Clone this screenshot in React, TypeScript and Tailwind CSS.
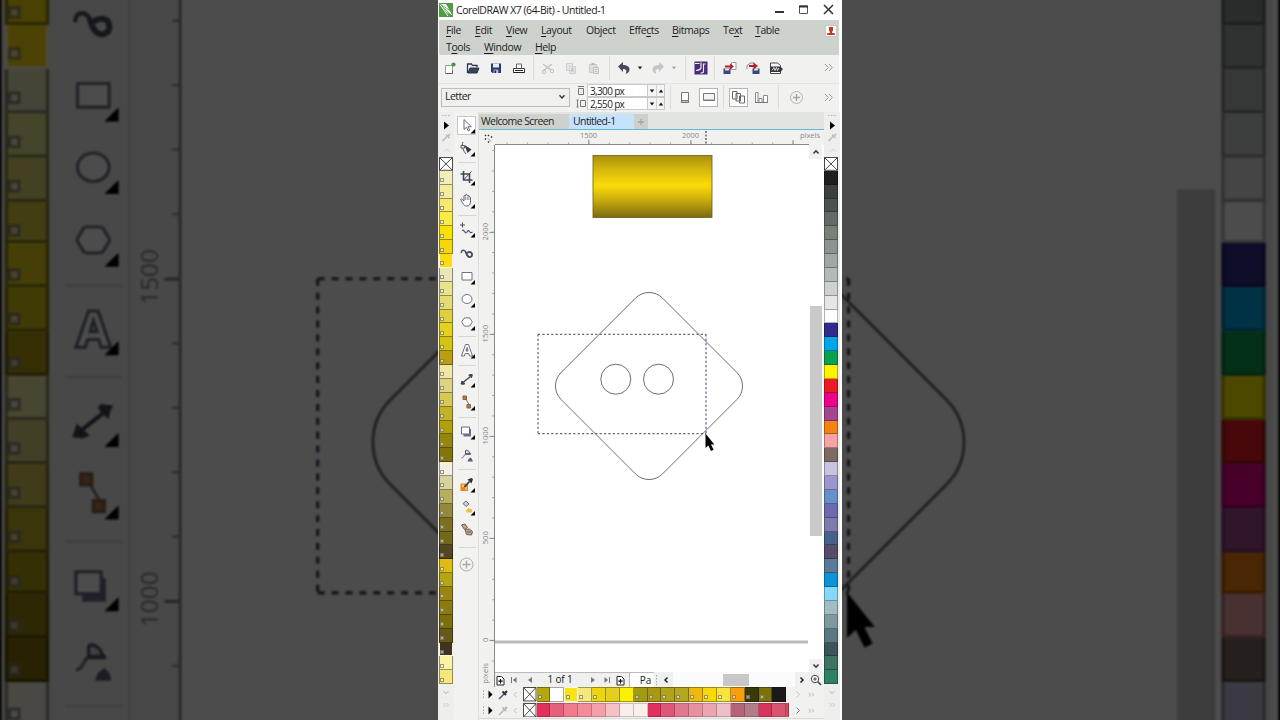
import React from "react";

const LEFT_SWATCHES = [
  "#f1eeb8", "#f3ec9a", "#f6ea6e", "#f8ec45", "#f9e200", "#f5d60c", "#fcdc10", "#e8e6b8", "#e9e38c", "#e4db72",
  "#ded03f", "#e6d21a", "#d8c410", "#b89e10", "#f0e6a0", "#ded382", "#d6c958", "#c4b225", "#b0a00c", "#97860c",
  "#857408", "#f3f0e0", "#d9d29a", "#b8ae60", "#94883c", "#7c7020", "#716818", "#524720", "#e0bc10", "#b4a612",
  "#9c8410", "#8a7a10", "#7c6e0c", "#665a18", "#3e3520", "#fbf2a4", "#f6e878",
];

const RIGHT_SWATCHES = [
  "#1d1f1d", "#3c403d", "#4d5251", "#666a66", "#7b7f7a", "#8c9390", "#a0a7a6", "#b4bab8", "#cdd1cf", "#e5e7e4",
  "#ffffff", "#2f2c8c", "#00a7e8", "#0ba04c", "#fff200", "#ec1c24", "#ec008c", "#a2478f", "#f58213", "#f6a3a6",
  "#7c6a63", "#c6c4e2", "#9b97cb", "#6590cc", "#7069b0", "#7f7aac", "#45618c", "#584c6a", "#5a7a97", "#0b93d8",
  "#86d8f8", "#a3bcc2", "#7e9a9c", "#597882", "#3d5458", "#3f7264", "#2e8263",
];

const DOC_SWATCHES = [
  "#b5a80c", "#ffffff", "#f8e413", "#f4e87a", "#eed50e", "#e2d01c", "#fbf000", "#a39a10", "#a89a0c", "#b0a418",
  "#b2a81e", "#f0b80c", "#f8d80c", "#f8e43c", "#fb9e0c", "#3a3a08", "#7c7208", "#1a1a1a",
];
const DOC_PLAIN = [1, 5, 6, 17];

const PINK_SWATCHES = [
  "#e0305e", "#e6607e", "#ee7c8c", "#f28c98", "#f3a0ac", "#f5c0c6", "#faecea", "#f9f0ea", "#e0305e", "#de567a",
  "#e07890", "#e690a2", "#eaa6b0", "#edbfc6", "#b56577", "#b27c88", "#d83460", "#d85470",
];

const MENU_TOP: [string, string, string][] = [
  ["", "F", "ile"], ["", "E", "dit"], ["", "V", "iew"], ["", "L", "ayout"], ["Ob", "j", "ect"],
  ["Effe", "c", "ts"], ["", "B", "itmaps"], ["Te", "x", "t"], ["", "T", "able"],
];
const MENU_BOTTOM: [string, string, string][] = [["T", "o", "ols"], ["", "W", "indow"], ["", "H", "elp"]];

const MENU_TOP_W = ["w-[29px]", "w-[31px]", "w-[35px]", "w-[45px]", "w-[43px]", "w-[43px]", "w-[51px]", "w-[32px]", "w-[30px]"];
const MENU_BOTTOM_W = ["w-[38px]", "w-[51px]", "w-[30px]"];

function MenuLabel({ parts }: { parts: [string, string, string] }) {
  return (
    <span>
      {parts[0]}
      <span className="underline decoration-1 underline-offset-[1.5px]">{parts[1]}</span>
      {parts[2]}
    </span>
  );
}

function Cell({ className = "w-[23px]", children }: { className?: string; children?: React.ReactNode }) {
  return <div className={`flex h-full shrink-0 items-center justify-center ${className}`}>{children}</div>;
}

function Icon({ w = 16, h = 16, children }: { w?: number; h?: number; children: React.ReactNode }) {
  return (
    <svg width={w} height={h} viewBox={`0 0 ${w} ${h}`} fill="none" className="block shrink-0">
      {children}
    </svg>
  );
}

function VSep({ className = "w-[6px]" }: { className?: string }) {
  return (
    <div className={`flex shrink-0 justify-center ${className}`}>
      <div className="h-[24px] w-px bg-[#dcdcda]" />
    </div>
  );
}

function DoubleChevron() {
  return (
    <svg width="9" height="9" viewBox="0 0 9 9" fill="none" className="block shrink-0">
      <path d="M1 1l3.3 3.5L1 8M5 1l3.3 3.5L5 8" stroke="#9a9a9a" />
    </svg>
  );
}

function Down({ color = "#222" }: { color?: string }) {
  return (
    <Icon w={6} h={4}>
      <path d="M0.8 0.5h4.4L3 3.4z" fill={color} />
    </Icon>
  );
}

function StandardBar() {
  return (
    <div className="flex h-[28px] items-center bg-[#f1f1ef] pb-[3px]">
      <Cell className="ml-[0.5px] w-[23px]">
        <Icon>
          <path d="M3.500 5.500h7v8h-7z" fill="#fff" stroke="#9b9fa6" />
          <path d="M3.500 13.500h7v-3" stroke="#555b66" />
          <circle cx="11.500" cy="4.500" r="2.100" fill="#3f9b35" />
        </Icon>
      </Cell>
      <Cell>
        <Icon>
          <path d="M2.500 13V4h4l1 1.500h4.500V7" stroke="#2c3350" strokeWidth="1.300" />
          <path d="M3 13L5 8h9l-2 5z" fill="#39405e" stroke="#2c3350" />
          <path d="M4.500 6.500h6" stroke="#e6e8f0" />
        </Icon>
      </Cell>
      <Cell>
        <Icon>
          <path d="M3 3.500h10v9.500H4.500L3 11.500z" fill="#2f3768" />
          <path d="M5 3.500h6v4H5z" fill="#e9ebf5" />
          <path d="M5.500 9.500h5V13h-5z" fill="#aab0cc" />
          <path d="M6.500 10.500h1.500V13H6.500z" fill="#1f2550" />
        </Icon>
      </Cell>
      <Cell>
        <Icon>
          <path d="M5.500 8V4h5v4" fill="#fff" stroke="#666" />
          <path d="M2.500 8.500h11v4h-11z" fill="#fff" stroke="#3a3a3a" />
          <path d="M2.500 12.500h11M4 10.500h8" stroke="#222" />
        </Icon>
      </Cell>
      <VSep />
      <Cell>
        <Icon>
          <path d="M3 4l8 6M3 11l9-7" stroke="#c2c2c2" strokeWidth="1.300" />
          <circle cx="12" cy="11" r="1.700" stroke="#c2c2c2" />
          <circle cx="4" cy="12" r="1.700" stroke="#c2c2c2" />
        </Icon>
      </Cell>
      <Cell>
        <Icon>
          <path d="M3.500 3.500h6v7h-6zM6.500 6.500h6v7h-6z" fill="#e6e6e6" stroke="#cfcfcf" />
          <path d="M8 9h3M8 11h3" stroke="#bbb" />
        </Icon>
      </Cell>
      <Cell>
        <Icon>
          <path d="M3.500 4.500h7v8h-7z" fill="#dedede" stroke="#cacaca" />
          <path d="M5.500 3h3v2h-3z" fill="#bbb" />
          <path d="M7.500 7.500h5v6h-5z" fill="#e6e6e6" stroke="#c1c1c1" />
          <path d="M9 9.500h2M9 11.500h2" stroke="#bbb" />
        </Icon>
      </Cell>
      <VSep className="w-[7px]" />
      <Cell>
        <Icon>
          <path d="M2 6.500L7 2v3c4 0 6.500 1.500 6.500 4.500 0 2-1.500 3.500-4 4.500 1.800-2.800 1-5-2.500-5v3z" fill="#454a58" />
        </Icon>
      </Cell>
      <Cell className="w-[8px]"><Down /></Cell>
      <Cell className="ml-[3px] w-[23px]">
        <Icon>
          <path d="M14 6.500L9 2v3c-4 0-6.500 1.500-6.500 4.500 0 2 1.500 3.500 4 4.500-1.800-2.800-1-5 2.500-5v3z" fill="#c4c5c7" />
        </Icon>
      </Cell>
      <Cell className="w-[9px]"><Down color="#aaa" /></Cell>
      <VSep className="w-[14px]" />
      <Cell className="w-[17px]">
        <Icon>
          <path d="M1.500 1.500h13v13h-13z" fill="#4b2a78" />
          <path d="M2 3.500h4.500M8 2.500v6M12.500 4H10.500v7.500c0 1.200-1 1.500-3 1.500M8 8.500c-1.500 1.500-3 2-5 2" stroke="#f0eaf8" strokeWidth="1.200" />
        </Icon>
      </Cell>
      <VSep className="w-[9px]" />
      <Cell>
        <Icon>
          <path d="M1.500 8.500h7v5.500h-7z" fill="#394873" />
          <path d="M3 8.500h4v2H3z" fill="#dfe3ef" />
          <path d="M9.500 2.500h4.500v7H9.500z" fill="#fff" stroke="#999" />
          <path d="M3 5.500h5V3.500L12 6.500 8 9.500v-2H3z" fill="#b31f24" />
        </Icon>
      </Cell>
      <Cell>
        <Icon>
          <path d="M7.500 8.500h7v5.500h-7z" fill="#394873" />
          <path d="M9 8.500h4v2H9z" fill="#dfe3ef" />
          <path d="M2 9V5.500L5.500 3h4" stroke="#888" />
          <path d="M4 5h4.500V2.500L13 6 8.500 9.500V7H4z" fill="#b31f24" />
        </Icon>
      </Cell>
      <Cell>
        <Icon>
          <path d="M2.500 3h7l3 2.500v8h-10z" fill="#fff" stroke="#444" />
          <path d="M2 6.500h10L15 9l-2.500 3H2z" fill="#33363c" />
          <path d="M4 10.500l2-3 1 3 1.500-3 1 3 1.500-2.500" stroke="#fff" strokeWidth=".8" />
        </Icon>
      </Cell>
      <div className="grow" />
      <Cell className="mr-[5px] w-[12px]"><DoubleChevron /></Cell>
    </div>
  );
}

function Field({ value, children }: { value: string; children: React.ReactNode }) {
  return (
    <div className="flex h-[13px] items-center">
      <div className="flex w-[12px] justify-center">{children}</div>
      <div className="flex h-[13px] w-[61px] items-center whitespace-nowrap border border-[#c9c9c7] bg-white pl-[2px] text-[10px] leading-none tracking-[-0.65px] text-[#1d1d1d]">
        {value}
      </div>
      <div className="flex h-[13px] w-[17px] items-center border-y border-r border-[#c9c9c7] bg-[#f4f4f4]">
        <Cell className="w-[8px]"><Down color="#111" /></Cell>
        <Cell className="w-[8px] border-l border-[#d4d4d4]"><span className="rotate-180"><Down color="#111" /></span></Cell>
      </div>
    </div>
  );
}

function PropertyBar() {
  return (
    <div className="flex h-[29px] items-center border-t border-[#e3e3e1] bg-[#f1f1ef] pb-[2px]">
      <div className="ml-[3px] flex h-[19px] w-[129px] items-center justify-between border border-[#bdbdbb] bg-[#f0f0ee] pl-[3px] pr-[3px] text-[10.5px] tracking-[-0.55px] text-[#222]">
        <span>Letter</span>
        <Icon w={8} h={6}><path d="M1.500 1.200L4 4l2.500-2.800" stroke="#333" strokeWidth="1.300" /></Icon>
      </div>
      <div className="ml-[5px] flex flex-col">
        <Field value="3,300 px">
          <Icon w={10} h={11}><path d="M2 1.500h6M2.500 3.500h5v6h-5z" stroke="#777" /></Icon>
        </Field>
        <Field value="2,550 px">
          <Icon w={10} h={11}><path d="M1.500 2v7M.5 2h2M.5 9h2M4.500 2.500h5v6h-5z" stroke="#777" /></Icon>
        </Field>
      </div>
      <VSep className="w-[11px]" />
      <Cell className="w-[18px]">
        <Icon w={10} h={13}>
          <path d="M1.500 1.500h7v10h-7z" fill="#fff" stroke="#777" />
          <path d="M1.500 11.500h7v-2h-7z" fill="#c6c6c6" stroke="#777" />
        </Icon>
      </Cell>
      <div className="ml-[5px] flex size-[19px] items-center justify-center border border-[#b5b5b5] bg-white">
        <Icon w={14} h={10}>
          <path d="M1.500 1.500h11v7h-11z" fill="#f4f4f4" stroke="#777" />
          <path d="M2 7.500h10" stroke="#bbb" />
        </Icon>
      </div>
      <VSep className="w-[11px]" />
      <div className="flex size-[19px] items-center justify-center border border-[#b5b5b5] bg-white">
        <Icon w={15} h={15}>
          <path d="M1.500 1.500h4.500v7.500H1.500zM5 3.500h4.500v7.500H5zM8.500 6h5v7h-5z" fill="#fff" stroke="#666" />
        </Icon>
      </div>
      <Cell className="w-[27px]">
        <Icon w={15} h={13}>
          <path d="M1.500 1.500h2.500v10H1.500zM5 7.500h3v4H5zM9.500 4.500h4v7h-4z" fill="#fff" stroke="#8a8a8a" />
          <path d="M1 11.500h13" stroke="#777" />
        </Icon>
      </Cell>
      <VSep className="w-[7px]" />
      <Cell className="ml-px w-[26px]">
        <Icon w={15} h={15}>
          <circle cx="7.500" cy="7.500" r="6" stroke="#b4b4b4" />
          <path d="M7.500 4v7M4 7.500h7" stroke="#a4a4a4" strokeWidth="1.400" />
        </Icon>
      </Cell>
      <div className="grow" />
      <Cell className="mr-[5px] w-[12px]"><DoubleChevron /></Cell>
    </div>
  );
}

function NoColour() {
  return (
    <svg viewBox="0 0 14 14" preserveAspectRatio="none" className="block h-full w-full bg-white">
      <path d="M.5.5h13v13H.5zM.5.5l13 13M13.500.5l-13 13" stroke="#333" strokeWidth=".9" fill="none" />
    </svg>
  );
}

function Marker() {
  return <div className="mb-[1.500px] size-[4px] border border-[#55544a]/60 bg-white/50" />;
}

function PaletteColumn({ colours, marked, highlighted }: { colours: string[]; marked: boolean; highlighted: number[] }) {
  return (
    <div className={`flex w-[16px] shrink-0 flex-col bg-[#eeeeec] ${marked ? "items-center" : "items-start"}`}>
      <div className="h-[45px] w-full">
        <Icon w={16} h={45}>
          <path d="M4 3.500h9" stroke="#b5b5b5" strokeDasharray="1.500 1.500" />
          <path d="M6 9.500l5 4-5 4z" fill="#000" />
          <path d="M4.500 29l5-5M8 22.500l3.500 3.500M9.500 24.500l2.500-2.500" stroke="#bdbdbd" strokeWidth="1.700" />
          <path d="M6.500 39.500L9 37l2.500 2.500" stroke="#d4d4d4" />
        </Icon>
      </div>
      <div className="h-[13.800px] w-[14px] shrink-0"><NoColour /></div>
      {colours.map((c, i) => (
        <div
          key={i}
          className={`flex h-[13.880px] w-[14px] shrink-0 items-end border-b border-x ${
            highlighted.includes(i) ? "border-[#fff8d8]" : marked ? "border-black/40" : "border-black/30"
          }`}
          style={{ backgroundColor: c }}
        >
          {marked && <Marker />}
        </div>
      ))}
      <div className="grow">
        <Icon w={16} h={28}>
          <path d="M5.500 7L8 9.500 10.500 7" stroke="#b0b0b0" />
          <path d="M5.500 19l2 2-2 2M8.500 19l2 2-2 2" stroke="#cacaca" />
        </Icon>
      </div>
    </div>
  );
}

function Tool({ fly = true, active = false, children }: { fly?: boolean; active?: boolean; children: React.ReactNode }) {
  return (
    <div className="flex h-[23.300px] w-[24px] shrink-0 items-center justify-center">
      <svg width="24" height="23" viewBox="0 0 24 23" fill="none" className="block">
        {active && <path d="M2.500 2.500h18v18h-18z" fill="#fff" stroke="#c6c6c6" />}
        {children}
        {fly && <path d="M20 15v4.500h-4.500z" fill="#000" />}
      </svg>
    </div>
  );
}

function ToolSep({ className = "h-[5.700px]" }: { className?: string }) {
  return (
    <div className={`flex w-full shrink-0 items-center justify-center ${className}`}>
      <div className="h-px w-[18px] bg-[#d6d6d4]" />
    </div>
  );
}

function Toolbox() {
  return (
    <div className="flex w-[25px] shrink-0 flex-col border-r border-[#dededc] bg-[#f2f2f0] pt-[1.500px] pl-px">
      <Tool active><path d="M9 5.500v10l2.500-2.300 1.700 3.800 1.500-.7-1.700-3.600h3.300z" fill="#fff" stroke="#666c7a" /></Tool>
      <Tool>
        <path d="M8 5c-2 4 .5 9 3 12" stroke="#4c5160" />
        <path d="M9.500 8l7 4.500-4 3.500z" fill="#33384a" />
        <path d="M6 8.500h3.500V11H6z" fill="#fff" stroke="#555" />
      </Tool>
      <ToolSep />
      <Tool>
        <path d="M8.500 5v9h9M5.500 8h9v9" stroke="#41465c" strokeWidth="1.600" />
        <path d="M9 13.500l7.500-8" stroke="#41465c" />
      </Tool>
      <Tool>
        <path d="M8 14.500L5.800 11c-.5-1.200.8-1.600 1.600-.6L9 12V7c.2-1 1.400-1 1.600 0v-.8c.3-1 1.500-1 1.700 0V7c.4-.8 1.500-.7 1.600.2v1c.5-.7 1.600-.4 1.600.6V13c0 2.500-1.500 4-3.700 4-2 0-2.800-.9-3.800-2.500z" fill="#fff" stroke="#5b6070" />
        <path d="M10.600 7.500v3.500M12.300 7.500v3.500M13.900 8.500V11" stroke="#7a7f8c" strokeWidth=".8" />
      </Tool>
      <ToolSep />
      <Tool>
        <path d="M7.500 4.500v5M5 7h5" stroke="#4a5068" strokeWidth="1.100" />
        <path d="M7 12.500c1-1 1.800-.2 2.500 1s1.500 2 2.500.5 1.500-2 2.500-.5 1.500 1.500 3 .5" stroke="#4a5068" strokeWidth="1.200" />
      </Tool>
      <Tool fly={false}>
        <path d="M6.300 10.500C6.500 7.500 10 7.500 11 10.500s2 5 4.500 4.300" stroke="#4a4f63" strokeWidth="1.400" strokeLinecap="round" />
        <path d="M11 10.500c1.200 4 3 5 4.800 4.200 2-1 1.600-4.400-.8-4.700-1.200-.1-1.800.2-2.300.6" stroke="#4a4f63" strokeWidth="1.900" strokeLinecap="round" />
      </Tool>
      <Tool><path d="M7 7.500h10v7.500H7z" fill="#fff" stroke="#6c7385" /></Tool>
      <Tool><ellipse cx="12" cy="11" rx="5" ry="4.500" fill="#fff" stroke="#6c7385" /></Tool>
      <Tool><path d="M9 7.200c.3-.5 5.700-.5 6 0l2 3.300c.2.300.2.700 0 1l-2 3.300c-.3.500-5.700.5-6 0l-2-3.300c-.2-.3-.2-.7 0-1z" fill="#fff" stroke="#6c7385" /></Tool>
      <ToolSep className="h-[4.400px]" />
      <Tool>
        <path d="M6.500 17l4-11.500h3L17.500 17h-3l-.8-2.500h-3.500L9.400 17zM11 12h2.200L12 8.500z" fill="#fff" stroke="#656c80" fillRule="evenodd" />
      </Tool>
      <ToolSep />
      <Tool>
        <path d="M8.500 14L15.500 8.500" stroke="#3d4252" strokeWidth="1.300" />
        <path d="M7 13l3 2.700-1.500.6-2.500-.3zM14.500 6.500l3 .3-.5 1-.5 2-2.500-2.500z" fill="#3d4252" stroke="#3d4252" />
      </Tool>
      <Tool>
        <path d="M10 6.500l4.500 8" stroke="#777" />
        <path d="M8 5h3.500v3.500H8zM12 13.500h3.500V17H12z" fill="#b77a4a" stroke="#8a6040" />
      </Tool>
      <ToolSep />
      <Tool>
        <path d="M8.500 9h7.500v7.500H8.500z" fill="#6a7090" />
        <path d="M6.500 7h8v7h-8z" fill="#fff" stroke="#656b84" />
      </Tool>
      <Tool fly={false}>
        <path d="M6.500 14c2.500 0 2-3 4.500-4.500" stroke="#6a7088" />
        <path d="M10.500 6.500c1.500-1 4 .5 4.500 3.500h-4.500z" fill="#d4d8e2" stroke="#4f556c" />
        <path d="M10 10h6" stroke="#4f556c" strokeWidth="1.400" />
        <path d="M12.500 17.500l1-2.500 2-1.500 1.500 1.500.8 2.500z" fill="#5a607a" />
      </Tool>
      <ToolSep />
      <Tool>
        <path d="M5.500 10.500h7.500v7.500H5.500z" fill="#e9862c" />
        <path d="M7 11.500h2V14H7zM10 14h2v2.500h-2z" fill="#f8c27c" />
        <path d="M9.500 14l5-5.500" stroke="#3f3f48" strokeWidth="1.800" />
        <path d="M12.500 6.500l4 4 1.500-4.500-1.500-1z" fill="#2f333f" />
      </Tool>
      <Tool>
        <path d="M8 7.500l3-2.500 3 3-3 2.500z" fill="#d8cdb8" stroke="#666b78" />
        <path d="M11 14.500l2.500-2.500 3.500 1.500v3h-5.500z" fill="#eebd48" />
      </Tool>
      <Tool fly={false}>
        <path d="M6.500 6l3.500-1 2.500 3.500-3 2z" fill="#c9a583" stroke="#6d6054" />
        <path d="M10 10.500l4.500-.5 3 2.500-1 3.500-5-.5z" fill="#bfa68c" stroke="#6d6054" />
        <path d="M12 13h4" stroke="#7c5436" />
      </Tool>
      <ToolSep className="h-[10px]" />
      <Tool fly={false}>
        <circle cx="11.500" cy="11.500" r="6.500" stroke="#b0b0b0" />
        <path d="M11.500 7.500v8M7.500 11.500h8" stroke="#a8a8a8" strokeWidth="1.300" />
      </Tool>
    </div>
  );
}

function range(from: number, to: number, step: number) {
  const out: number[] = [];
  for (let v = from; v <= to; v += step) out.push(v);
  return out;
}

const RULER_FONT = "Open Sans, Noto Sans, sans-serif";

const VERTICAL_MARKS = [
  { label: "2000", y: 232 },
  { label: "1500", y: 334 },
  { label: "1000", y: 436 },
  { label: "500", y: 538 },
  { label: "0", y: 640 },
];

function HorizontalRuler() {
  return (
    <svg width="345" height="15" viewBox="479 130 345 15" className="block shrink-0 bg-[#f1f1f0]">
      <path d="M485 135h1v1h-1zM488 135h1v1h-1zM491 136.500h1v1h-1zM485 138.500h1v1h-1zM488 138.500l3 3M488 141.500h1v1h-1z" fill="#333" stroke="#333" strokeWidth=".5" />
      {range(507.2, 806, 20.420).map((x) => <path key={x} d={`M${x} 142.500v2`} stroke="#999" strokeWidth=".8" />)}
      {[588.8, 690.9, 793].map((x) => <path key={x} d={`M${x} 140v4`} stroke="#888" />)}
      <path d="M495 144.500h314" stroke="#888" />
      <path d="M706 131v13" stroke="#222" strokeDasharray="2 1.500" />
      <g fontFamily={RULER_FONT} fontSize="7.500" fill="#8a8a8a">
        <text x="588.500" y="138" textAnchor="middle">1500</text>
        <text x="690.500" y="138" textAnchor="middle">2000</text>
        <text x="820" y="138" textAnchor="end">pixels</text>
      </g>
    </svg>
  );
}

function VerticalRuler({ from, to }: { from: number; to: number }) {
  return (
    <svg width="16" height="542" viewBox="479 145 16 542" className="block shrink-0 bg-[#f1f1f0]">
      {range(150.500, 680, 20.420).map((y) => <path key={y} d={`M492 ${y}h2.500`} stroke="#999" strokeWidth=".8" />)}
      {VERTICAL_MARKS.map((m) => <path key={m.y} d={`M489.500 ${m.y + 0.4}h5`} stroke="#888" />)}
      <path d="M494.500 145v542" stroke="#888" />
      <g fontFamily={RULER_FONT} fontSize="7.700" fill="#858585" textAnchor="middle">
        {VERTICAL_MARKS.filter((m) => m.y > from && m.y < to).map((m) => (
          <text key={m.y} transform={`translate(487.500 ${m.y - 0.3}) rotate(-90)`}>{m.label}</text>
        ))}
        {to > 673 && <text transform="translate(488 673.500) rotate(-90)">pixels</text>}
      </g>
    </svg>
  );
}

function Drawing({ id }: { id: string }) {
  return (
    <svg width="314" height="527" viewBox="495 145 314 527" fill="none" className="block shrink-0 bg-white">
      <defs>
        <linearGradient id={id} x1="0" y1="0" x2="0" y2="1">
          <stop offset="0" stopColor="#a8900f" />
          <stop offset=".22" stopColor="#d4b60c" />
          <stop offset=".48" stopColor="#fbdc08" />
          <stop offset=".7" stopColor="#cdb00c" />
          <stop offset="1" stopColor="#7b6910" />
        </linearGradient>
      </defs>
      <rect x="593" y="155.500" width="119" height="62" fill={`url(#${id})`} stroke="#6a5c18" strokeWidth=".8" />
      <rect x="577.300" y="314.300" width="143.400" height="143.400" rx="19" transform="rotate(45 649 386)" stroke="#666" strokeWidth=".9" />
      <circle cx="615.800" cy="379.200" r="15" stroke="#5c5c5c" strokeWidth=".9" />
      <circle cx="658.500" cy="379.200" r="15" stroke="#5c5c5c" strokeWidth=".9" />
      <path d="M538 334.300h168M538 433.700h168M538 334.300v99.400M706 334.300v99.400" stroke="#3d3d5c" strokeDasharray="2.200 2.200" />
      <path d="M495 642h313" stroke="#b9b9b9" strokeWidth="3" />
      <path d="M705.500 433.500v14.500l2.800-2.600 2.700 5.600 2.600-1.200-2.600-5.300h3.300z" fill="#000" />
    </svg>
  );
}

function VerticalScroll() {
  return (
    <div className="flex w-[15px] shrink-0 flex-col items-start bg-white">
      <div className="flex h-[14px] w-[13px] items-center justify-center bg-[#f1f1f1]">
        <Icon w={8} h={6}><path d="M1.500 4.500L4 1.800l2.500 2.700" stroke="#333" strokeWidth="1.500" /></Icon>
      </div>
      <div className="ml-[0.500px] mt-[147px] h-[230px] w-[12.500px] bg-[#cacaca]" />
      <div className="grow" />
      <div className="flex h-[13px] w-[13px] items-center justify-center bg-[#f1f1f1]">
        <Icon w={8} h={6}><path d="M1.500 1.500L4 4.200l2.500-2.700" stroke="#333" strokeWidth="1.500" /></Icon>
      </div>
    </div>
  );
}

function AddPage() {
  return (
    <Icon w={9} h={11}>
      <path d="M1 1.500h4.500L8 4v6H1z" fill="#fff" stroke="#222" />
      <path d="M4.500 4v4.500M2.300 6.200h4.400" stroke="#111" strokeWidth="1.200" />
    </Icon>
  );
}

function PageNavigator() {
  return (
    <div className="flex h-[15px] items-center bg-[#f0f0f0] text-[10px] tracking-[-0.2px] text-[#222]">
      <div className="flex h-full w-[134px] items-center border-t border-[#bbb]">
        <Cell className="w-[11px]"><AddPage /></Cell>
        <Cell className="w-[16px]"><Icon w={8} h={8}><path d="M1.500 1v6" stroke="#777" /><path d="M6.500 1v6L3 4z" fill="#777" /></Icon></Cell>
        <Cell className="w-[15px]"><Icon w={6} h={8}><path d="M5 1v6L1 4z" fill="#777" /></Icon></Cell>
        <Cell className="w-[46px] pb-px">1 of 1</Cell>
        <Cell className="w-[19px]"><Icon w={6} h={8}><path d="M1 1v6l4-3z" fill="#777" /></Icon></Cell>
        <Cell className="w-[10px]"><Icon w={8} h={8}><path d="M6.500 1v6" stroke="#777" /><path d="M1.500 1v6L5 4z" fill="#777" /></Icon></Cell>
        <Cell className="w-[16px]"><AddPage /></Cell>
      </div>
      <div className="flex h-full w-[25px] items-center justify-end border-l border-t border-[#bbb] bg-white pr-[3px] pb-px leading-none">Pa</div>
      <Cell className="w-[5px]"><Icon w={3} h={11}><path d="M1.500 1v10" stroke="#aaa" strokeDasharray="1.500 1.500" /></Icon></Cell>
      <Cell className="w-[14px]"><Icon w={6} h={8}><path d="M4.500 1.500L2 4l2.500 2.500" stroke="#222" strokeWidth="1.500" /></Icon></Cell>
      <div className="flex h-full w-[122px] items-center bg-[#fbfbfb]">
        <div className="ml-[50px] h-[12px] w-[26px] bg-[#c8c8c8]" />
      </div>
      <Cell className="w-[13px]"><Icon w={6} h={8}><path d="M1.500 1.500L4 4 1.500 6.500" stroke="#222" strokeWidth="1.500" /></Icon></Cell>
      <Cell className="w-[15px]">
        <Icon w={12} h={12}>
          <circle cx="5" cy="5" r="3.700" fill="#fff" stroke="#444" />
          <path d="M5 3.200v3.600M3.200 5h3.600" stroke="#444" />
          <path d="M7.800 7.800L11 11" stroke="#444" strokeWidth="1.600" />
        </Icon>
      </Cell>
    </div>
  );
}

function BottomPalette({ colours, plain, tail, dark }: { colours: string[]; plain: number[]; tail: boolean; dark: boolean }) {
  return (
    <div className="flex h-[15.500px] items-start bg-[#f1f1ef]">
      <Icon w={44} h={15}>
        <path d="M4.500 3.500v8" stroke="#aaa" strokeDasharray="1.500 1.500" />
        <path d="M9.500 3.500l4 4-4 4z" fill="#000" />
        <path d="M20 12l5-5" stroke={dark ? "#55596a" : "#b9b9b9"} strokeWidth="1.600" />
        <path d="M23.500 4.500l3.500 3.500M25.500 6.500L28 4" stroke={dark ? "#30344a" : "#b9b9b9"} strokeWidth="2.200" />
        <path d="M37.500 5L35 7.500l2.500 2.500" stroke="#bbb" />
      </Icon>
      <div className="h-[14.500px] w-[13.500px] shrink-0"><NoColour /></div>
      {colours.map((c, i) => (
        <div
          key={i}
          className={`flex h-[14.500px] w-[13.880px] shrink-0 items-end border-r border-y ${
            dark && i === 2 ? "border-l border-[#fffbe0]" : dark ? "border-black/35" : "border-black/20"
          }`}
          style={{ backgroundColor: c }}
        >
          {dark && !plain.includes(i) && <div className="ml-px"><Marker /></div>}
        </div>
      ))}
      {tail && <div className="h-[14.500px] w-[3px] shrink-0 border-r border-[#a03048] bg-[#d84a66]" />}
      <div className="grow" />
      <Icon w={30} h={15}>
        <path d="M2.500 4.500l3 3-3 3" stroke={dark ? "#c4c4c4" : "#777"} />
        <path d="M15 6l1.700 1.800L15 9.500M18 6l1.700 1.800L18 9.500" stroke="#bbb" />
      </Icon>
    </div>
  );
}

function Tabs() {
  return (
    <div className="flex h-[18px] items-end border-b-[1.500px] border-[#5fb8d4] bg-[#e2e4e2] text-[10.500px] leading-[15px] tracking-[-0.600px] text-[#1f1f1f]">
      <div className="h-[15px] w-[90px] whitespace-nowrap bg-[#cfd2cc] pl-[2px]">Welcome Screen</div>
      <div className="h-[15px] w-[65px] bg-[#c6e2fa] pl-[4px]">Untitled-1</div>
      <div className="flex h-[15px] w-[14px] items-center justify-center bg-[#cdcfca]">
        <Icon w={8} h={8}><path d="M4 1v6M1 4h6" stroke="#a6a8a4" strokeWidth="1.300" /></Icon>
      </div>
    </div>
  );
}

function Workspace() {
  return (
    <div className="flex w-[345px] shrink-0 flex-col">
      <Tabs />
      <HorizontalRuler />
      <div className="flex h-[542px]">
        <VerticalRuler from={0} to={720} />
        <div className="flex w-[329px] flex-col">
          <div className="flex h-[527px]">
            <Drawing id="gold" />
            <VerticalScroll />
          </div>
          <PageNavigator />
        </div>
      </div>
      <BottomPalette colours={DOC_SWATCHES} plain={DOC_PLAIN} tail={false} dark />
      <BottomPalette colours={PINK_SWATCHES} plain={[]} tail dark={false} />
      <div className="grow border-t border-[#d8d8d6] bg-[#f4f4f2]" />
    </div>
  );
}

function TitleBar() {
  return (
    <div className="flex h-[20px] w-[404px] shrink-0 items-center bg-white">
      <svg width="14" height="14" viewBox="0 0 14 14" className="ml-px block shrink-0">
        <path d="M0 0h14v14H0z" fill="#4a9e41" />
        <path d="M1 1l6 0 6.500 11.500-5.500-3z" fill="#fff" />
        <path d="M1 1l12 12M1 1l11.500 7.500M1 1l8 12" fill="none" stroke="#4a9e41" strokeWidth=".7" />
        <path d="M1 1.500L9 13" stroke="#fff" />
      </svg>
      <div className="ml-[3px] grow whitespace-nowrap pt-px text-[10.500px] tracking-[-0.480px] text-[#222]">CorelDRAW X7 (64-Bit) - Untitled-1</div>
      <Icon w={62} h={20}>
        <path d="M2 12h9" stroke="#333" strokeWidth="2" />
        <path d="M26.500 6h8v7.500h-8z" stroke="#555" />
        <path d="M26 6.500h9" stroke="#333" strokeWidth="2" />
        <path d="M51 5l9 9M60 5l-9 9" stroke="#333" strokeWidth="1.500" />
      </Icon>
      <div className="w-[7px]" />
    </div>
  );
}

function MenuBar() {
  return (
    <div className="ml-px flex h-[35px] shrink-0 bg-[#ced2cd] pt-[1.500px] text-[10.500px] leading-[17px] tracking-[-0.400px] text-[#1d1d1d]">
      <div className="flex grow flex-col pl-[7px]">
        <div className="flex h-[17px]">
          {MENU_TOP.map((m, i) => (
            <div key={i} className={`${MENU_TOP_W[i]} shrink-0 whitespace-nowrap`}><MenuLabel parts={m} /></div>
          ))}
        </div>
        <div className="flex h-[16.500px]">
          {MENU_BOTTOM.map((m, i) => (
            <div key={i} className={`${MENU_BOTTOM_W[i]} shrink-0 whitespace-nowrap`}><MenuLabel parts={m} /></div>
          ))}
        </div>
      </div>
      <div className="mr-[2px] mt-[3px] flex size-[12px] items-center justify-center border border-[#c5c9c4] bg-white">
        <Icon w={10} h={10}>
          <path d="M3 1h4v3.500l-1 1.500v.7l3 .8V9H1V7.500l3-.8V6L3 4.500z" fill="#c33a22" />
        </Icon>
      </div>
    </div>
  );
}

function AppWindow() {
  return (
    <div className="flex h-[720px] w-[404px] shrink-0 flex-col overflow-hidden bg-white font-['Open_Sans','Noto_Sans',sans-serif]">
      <TitleBar />
      <div className="flex h-[700px] w-[401px] flex-col">
        <MenuBar />
        <StandardBar />
        <PropertyBar />
        <div className="flex h-[608px]">
          <PaletteColumn colours={LEFT_SWATCHES} marked highlighted={[6, 34]} />
          <Toolbox />
          <Workspace />
          <PaletteColumn colours={RIGHT_SWATCHES} marked={false} highlighted={[]} />
        </div>
      </div>
    </div>
  );
}

function EnlargedWorkArea() {
  return (
    <div className="flex h-[720px] w-[404px] shrink-0 bg-white pt-[112px]">
      <PaletteColumn colours={LEFT_SWATCHES} marked highlighted={[6, 34]} />
      <Toolbox />
      <div className="flex w-[345px] shrink-0 pt-[33px]">
        <VerticalRuler from={300} to={470} />
        <Drawing id="goldBackdrop" />
        <VerticalScroll />
      </div>
      <PaletteColumn colours={RIGHT_SWATCHES} marked={false} highlighted={[]} />
    </div>
  );
}

export default function App() {
  return (
    <div className="relative flex h-[720px] w-[1280px] justify-center overflow-hidden bg-black">
      <div className="absolute inset-0 flex justify-center overflow-hidden" aria-hidden="true">
        <div className="origin-center scale-[3.160]">
          <div className="blur-[0.350px]">
            <EnlargedWorkArea />
          </div>
        </div>
      </div>
      <div className="absolute inset-0 bg-black/70" />
      <div className="relative">
        <AppWindow />
      </div>
    </div>
  );
}
